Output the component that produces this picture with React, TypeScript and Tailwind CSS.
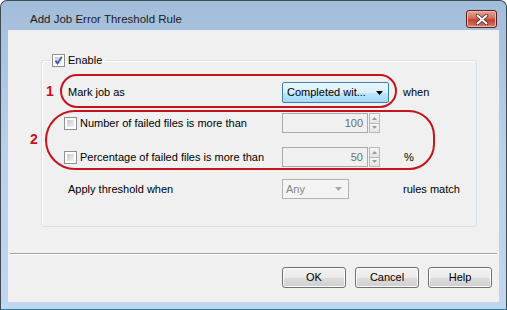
function Check({ checked }: { checked?: boolean }) {
  return (
    <span className="relative flex h-[13px] w-[13px] shrink-0 border border-[#8e8f8f] bg-white p-[2px]">
      <span className="flex-1 bg-gradient-to-br from-[#c6c9ce] to-[#f4f4f5]" />
      {checked && (
        <svg viewBox="0 0 11 11" className="absolute left-0 top-0 h-[11px] w-[11px]">
          <path d="M2.5 5.5 L4.5 8.5 L8.8 1.8" fill="none" stroke="#3d5899" strokeWidth="1.7" />
        </svg>
      )}
    </span>
  );
}

function Spinner({ value }: { value: string }) {
  return (
    <div className="flex h-[20px] items-stretch gap-[1px]">
      <div className="flex w-[86px] items-center justify-end border border-[#ababab] bg-[#f0f0f0] pr-[4px] text-[#6d6d6d]">
        {value}
      </div>
      <div className="flex w-[11px] flex-col gap-[0px]">
        <div className="flex flex-1 items-center justify-center border border-[#b9b9b9] bg-gradient-to-b from-[#f6f6f6] to-[#e4e4e4]">
          <svg viewBox="0 0 5 3" className="h-[3px] w-[5px]"><path d="M0 3 L2.5 0 L5 3Z" fill="#9a9a9a" /></svg>
        </div>
        <div className="flex flex-1 items-center justify-center border border-t-0 border-[#b9b9b9] bg-gradient-to-b from-[#f6f6f6] to-[#e4e4e4]">
          <svg viewBox="0 0 5 3" className="h-[3px] w-[5px]"><path d="M0 0 L2.5 3 L5 0Z" fill="#9a9a9a" /></svg>
        </div>
      </div>
    </div>
  );
}

function Button({ label }: { label: string }) {
  return (
    <button className="flex h-[21px] w-[64px] items-center justify-center rounded-[3px] border border-[#707070] bg-[linear-gradient(#f2f2f2_0%,#ebebeb_50%,#dddddd_51%,#cfcfcf_100%)] text-black shadow-[inset_0_0_0_1px_#fcfcfc]">
      {label}
    </button>
  );
}

export default function App() {
  return (
    <div className="relative h-[310px] w-[507px] bg-white font-['Liberation_Sans',Arial,sans-serif] text-[11px] leading-[13px] text-black">
      <div className="flex h-[310px] w-[507px] flex-col rounded-t-[7px] border border-[#3f4a57] border-b-[#1f7fa4] bg-gradient-to-b from-[#a2bddb] via-[#bad1ea] to-[#c2d7ed]">
        {/* title bar */}
        <div className="flex h-[29px] items-start pl-[29px]">
          <span className="mt-[11px] text-[11.5px] leading-[14px] text-[#1b1b1b]">Add Job Error Threshold Rule</span>
          <div className="ml-auto mr-[9px] mt-[9px] flex h-[18px] w-[31px] items-center justify-center rounded-[3px] border border-[#5a1c1c] bg-[linear-gradient(#e8a493_0%,#d2705f_45%,#c0402f_55%,#d2806f_100%)] shadow-[inset_0_0_0_1px_#efb9ae]">
            <svg viewBox="0 0 14 11" className="h-[11px] w-[14px]">
              <path d="M2.5 1.5 L11.5 9.5 M11.5 1.5 L2.5 9.5" stroke="#4a2a2a" strokeWidth="3.6" strokeLinecap="round" />
              <path d="M2.5 1.5 L11.5 9.5 M11.5 1.5 L2.5 9.5" stroke="#ffffff" strokeWidth="2" strokeLinecap="round" />
            </svg>
          </div>
        </div>

        {/* client area */}
        <div className="mx-[7px] flex h-[272px] flex-col bg-[#f0f0f0]">
          <fieldset className="ml-[33px] mt-[23px] w-[436px] rounded-[3px] border border-[#d5dfe5] pb-[27px] pt-[15px] shadow-[inset_1px_1px_0_#fff]">
            <legend className="ml-[9px] flex h-[14px] items-center gap-[3px] px-[1px] pr-[3px]">
              <Check checked />
              <span>Enable</span>
            </legend>

            <div className="flex h-[21px] items-center pl-[26px]">
              <span className="w-[214px]">Mark job as</span>
              <div className="flex h-[21px] w-[107px] items-center justify-between rounded-[2px] border border-[#3c7fb1] bg-[linear-gradient(#eaf6fd_0%,#d9f0fc_50%,#bee6fd_51%,#a7d9f5_100%)] pl-[4px] pr-[5px]">
                <span>Completed wit...</span>
                <svg viewBox="0 0 7 4" className="h-[4px] w-[7px]"><path d="M0 0 L7 0 L3.5 4Z" fill="#000" /></svg>
              </div>
              <span className="ml-[14px]">when</span>
            </div>

            <div className="mt-[10px] flex h-[20px] items-center pl-[22px]">
              <div className="flex w-[218px] items-center">
                <Check />
                <span className="ml-[3px]">Number of failed files is more than</span>
              </div>
              <Spinner value="100" />
            </div>

            <div className="mt-[14px] flex h-[20px] items-center pl-[22px]">
              <div className="flex w-[218px] items-center">
                <Check />
                <span className="ml-[3px]">Percentage of failed files is more than</span>
              </div>
              <Spinner value="50" />
              <span className="ml-[24px]">%</span>
            </div>

            <div className="mt-[12px] flex h-[20px] items-center pl-[26px]">
              <span className="w-[214px]">Apply threshold when</span>
              <div className="flex h-[20px] w-[67px] items-center justify-between border border-[#adb2b5] bg-[#f4f4f4] pl-[3px] pr-[6px] text-[#838383]">
                <span>Any</span>
                <svg viewBox="0 0 7 4" className="h-[4px] w-[7px]"><path d="M0 0 L7 0 L3.5 4Z" fill="#a8a8a8" /></svg>
              </div>
              <span className="ml-[54px]">rules match</span>
            </div>
          </fieldset>

          <div className="mx-[2px] mt-[26px] border-b border-t border-b-white border-t-[#a0a0a0]" />

          <div className="mt-[12px] flex justify-end gap-[9px] pr-[7px]">
            <Button label="OK" />
            <Button label="Cancel" />
            <Button label="Help" />
          </div>
        </div>
      </div>

      {/* red annotations drawn over the dialog */}
      <div className="absolute left-[60px] top-[74px] h-[34px] w-[337px] rounded-[17px] border-2 border-[#c4141c]" />
      <div className="absolute left-[45px] top-[110px] h-[60px] w-[390px] rounded-l-[30px] rounded-r-[26px] border-2 border-[#c4141c]" />
      <span className="absolute left-[46px] top-[83px] text-[14px] font-bold leading-[16px] text-[#c4141c]">1</span>
      <span className="absolute left-[30px] top-[131px] text-[14px] font-bold leading-[16px] text-[#c4141c]">2</span>
    </div>
  );
}
